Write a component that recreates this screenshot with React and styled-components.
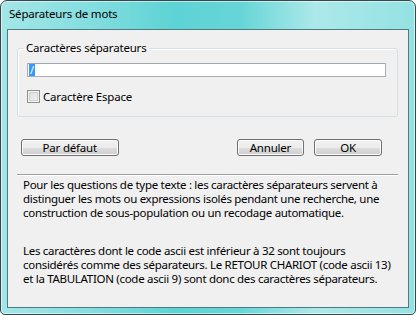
import React from 'react';
import styled, { createGlobalStyle } from 'styled-components';

const GlobalStyle = createGlobalStyle`
  html, body {
    margin: 0;
    padding: 0;
    background: #ffffff;
  }
  * {
    box-sizing: border-box;
  }
`;

const Frame = styled.div`
  width: 416px;
  height: 315px;
  border: 1px solid #37484d;
  border-radius: 7px 7px 5px 5px;
  display: flex;
  flex-direction: column;
  padding: 0 6px 6px 6px;
  background:
    linear-gradient(90deg, rgba(255, 255, 255, 0.45) 0%, rgba(255, 255, 255, 0.25) 22%, rgba(255, 255, 255, 0.02) 42%, rgba(255, 255, 255, 0.08) 58%, rgba(255, 255, 255, 0.5) 76%, rgba(255, 255, 255, 0.35) 100%),
    #5ad2d4;
  box-shadow: inset 0 0 0 1px rgba(255, 255, 255, 0.55);
  font-family: 'Noto Sans', 'Open Sans', sans-serif;
  color: #000;
`;

const TitleBar = styled.div`
  height: 28px;
  display: flex;
  align-items: center;
  padding: 0 0 3px 2px;
  font-size: 11.5px;
  letter-spacing: -0.2px;
  color: #000;
`;

const Client = styled.div`
  flex: 1;
  background: #f0f0f0;
  border: 1px solid #4f7a7e;
  display: flex;
  flex-direction: column;
  padding: 11px 10px 0 9px;
`;

const Group = styled.fieldset`
  margin: 0;
  height: 76px;
  padding: 0 11px 0 9px;
  border: 1px solid #d5dfe5;
  border-radius: 3px;
  display: flex;
  flex-direction: column;
  box-shadow: inset 1px 1px 0 #ffffff;
`;

const Legend = styled.legend`
  padding: 0 3px;
  margin-left: -4px;
  font-size: 11.5px;
  letter-spacing: -0.2px;
  line-height: 14px;
`;

const Field = styled.div`
  margin-top: 8px;
  height: 14px;
  width: 359px;
  background: #fff;
  border: 1px solid #abadb3;
  border-top-color: #a4a8af;
  display: flex;
  align-items: center;
  padding-left: 1px;
`;

const Selected = styled.span`
  background: #3399ff;
  color: #fff;
  font-size: 11px;
  line-height: 12px;
  padding: 0 1px;
`;

const CheckRow = styled.label`
  margin-top: 12px;
  display: flex;
  align-items: center;
  gap: 3px;
  font-size: 11.5px;
  letter-spacing: -0.2px;
`;

const Box = styled.span`
  width: 13px;
  height: 13px;
  border: 1px solid #8f8f8f;
  background: linear-gradient(135deg, #dcdcdc 0%, #f4f4f4 100%);
  box-shadow: inset 0 0 0 1px #f4f4f4, inset 0 0 0 2px #d0d0d0;
`;

const ButtonRow = styled.div`
  margin-top: 22px;
  display: flex;
  padding-left: 4px;
  padding-right: 16px;
`;

const Button = styled.div`
  width: ${(p) => p.w}px;
  height: 17px;
  margin-left: ${(p) => p.ml || 0}px;
  border: 1px solid #707070;
  border-radius: 3px;
  background: linear-gradient(#f2f2f2 0%, #ebebeb 50%, #dddddd 51%, #cfcfcf 100%);
  box-shadow: inset 0 0 0 1px #fcfcfc;
  display: flex;
  align-items: center;
  justify-content: center;
  font-size: 11.5px;
  letter-spacing: -0.2px;
  line-height: 1;
`;

const Separator = styled.div`
  margin-top: 18px;
  height: 1px;
  background: #a0a0a0;
  box-shadow: 0 1px 0 #ffffff;
`;

const Help = styled.div`
  padding: 3px 0 0 6px;
  font-size: 11.5px;
  letter-spacing: -0.3px;
  line-height: 14.2px;
  white-space: nowrap;
`;

const Para = styled.p`
  margin: 0 0 ${(p) => p.mb || 0}px 0;
`;

export default function App() {
  return (
    <>
      <GlobalStyle />
      <Frame>
        <TitleBar>Séparateurs de mots</TitleBar>
        <Client>
          <Group>
            <Legend>Caractères séparateurs</Legend>
            <Field>
              <Selected>/</Selected>
            </Field>
            <CheckRow>
              <Box />
              Caractère Espace
            </CheckRow>
          </Group>
          <ButtonRow>
            <Button w={98}>Par défaut</Button>
            <Button w={68} ml={118}>Annuler</Button>
            <Button w={68} ml={10}>OK</Button>
          </ButtonRow>
          <Separator />
          <Help>
            <Para mb={23}>
              Pour les questions de type texte : les caractères séparateurs servent à
              <br />
              distinguer les mots ou expressions isolés pendant une recherche, une
              <br />
              construction de sous-population ou un recodage automatique.
            </Para>
            <Para>
              Les caractères dont le code ascii est inférieur à 32 sont toujours
              <br />
              considérés comme des séparateurs. Le RETOUR CHARIOT (code ascii 13)
              <br />
              et la TABULATION (code ascii 9) sont donc des caractères séparateurs.
            </Para>
          </Help>
        </Client>
      </Frame>
    </>
  );
}
